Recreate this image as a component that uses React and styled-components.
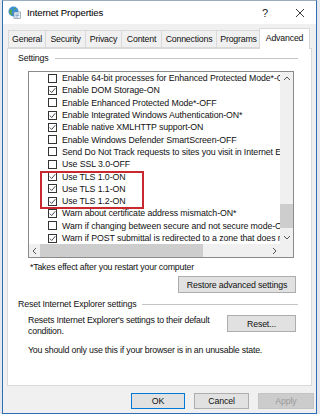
import React from 'react'
import styled, { createGlobalStyle } from 'styled-components'

const GlobalStyle = createGlobalStyle`
    html, body {
        margin: 0;
        padding: 0;
        background: #e4e8ec;
    }
    body {
        font-family: 'Liberation Sans', Arial, sans-serif;
        font-size: 9px;
        color: #111;
    }
`

const Window = styled.div`
    width: 313px;
    height: 412px;
    margin-left: 2px;
    border: 1px solid #2c6db5;
    border-top-color: #9ab;
    background: #f0f0f0;
    display: flex;
    flex-direction: column;
    overflow: hidden;
`

const TitleBar = styled.div`
    height: 23px;
    background: #fff;
    display: flex;
    align-items: center;
    padding-left: 5px;
    flex-shrink: 0;
`

const Title = styled.span`
    margin-left: 6px;
    font-size: 9.6px;
    letter-spacing: -0.15px;
    color: #000;
    flex: 1;
`

const TitleButton = styled.span`
    width: ${p => p.w}px;
    display: flex;
    justify-content: center;
    align-items: center;
    color: #222;
    font-size: 11px;
`

const Body = styled.div`
    flex: 1;
    display: flex;
    flex-direction: column;
    padding: 4px 4px 0 4px;
`

const TabStrip = styled.div`
    display: flex;
    align-items: flex-end;
    height: 20px;
    padding-left: 1px;
    position: relative;
    z-index: 1;
`

const Tab = styled.div`
    width: ${p => p.w}px;
    height: ${p => (p.active ? 21 : 18)}px;
    margin: ${p => (p.active ? '0 -1px -1px -1px' : '0')};
    box-sizing: border-box;
    border: 1px solid #d9d9d9;
    border-right: ${p => (p.active ? '1px solid #d9d9d9' : 'none')};
    border-bottom: ${p => (p.active ? 'none' : '1px solid #d9d9d9')};
    background: ${p => (p.active ? '#fff' : '#f0f0f0')};
    display: flex;
    align-items: ${p => (p.active ? 'flex-start' : 'center')};
    padding-top: ${p => (p.active ? '4px' : '0')};
    justify-content: center;
    font-size: 8.8px;
    letter-spacing: -0.2px;
    color: #111;
    &:last-child { border-right: 1px solid #d9d9d9; }
`

const Panel = styled.div`
    width: 305px;
    height: 338px;
    box-sizing: border-box;
    border: 1px solid #d9d9d9;
    background: #fff;
    display: flex;
    flex-direction: column;
    flex-shrink: 0;
`

const GroupHeader = styled.div`
    display: flex;
    align-items: center;
    height: 10px;
    padding: 0 13px 0 10px;
    margin-top: ${p => p.top}px;
    font-size: 8.8px;
    letter-spacing: -0.15px;
    gap: 6px;
    &::after {
        content: '';
        flex: 1;
        height: 1px;
        background: #c4c4c4;
    }
`

const ListBox = styled.div`
    width: 266px;
    height: 187px;
    box-sizing: border-box;
    margin: 8px 0 0 20px;
    border: 1px solid #8a8a8a;
    display: grid;
    grid-template-columns: 1fr 13px;
    grid-template-rows: 1fr 13px;
`

const ListContent = styled.div`
    position: relative;
    overflow: hidden;
`

const Row = styled.div`
    height: 12.3px;
    display: flex;
    align-items: center;
    padding-left: 19px;
    white-space: nowrap;
    font-size: 8.8px;
    letter-spacing: -0.1px;
    color: #111;
`

const Box = styled.span`
    width: 9px;
    height: 9px;
    box-sizing: border-box;
    border: 1px solid #333;
    background: #fff;
    margin-right: 5px;
    flex-shrink: 0;
    display: flex;
    align-items: center;
    justify-content: center;
`

const Highlight = styled.div`
    position: absolute;
    left: 11px;
    top: 99px;
    width: 104px;
    height: 38px;
    box-sizing: border-box;
    border: 2px solid #c8282e;
`

const ScrollTrack = styled.div`
    background: #f0f0f0;
    position: relative;
    display: flex;
    flex-direction: ${p => (p.horizontal ? 'row' : 'column')};
    justify-content: space-between;
    align-items: center;
`

const Thumb = styled.div`
    position: absolute;
    background: #cdcdcd;
`

const Arrow = styled.span`
    width: ${p => (p.horizontal ? 11 : 13)}px;
    height: 13px;
    display: flex;
    align-items: center;
    justify-content: center;
`

const Corner = styled.div`
    background: #f0f0f0;
`

const Note = styled.div`
    margin: 4px 0 0 22px;
    height: 10px;
    line-height: 10px;
    font-size: 8.8px;
    letter-spacing: -0.2px;
`

const ButtonRow = styled.div`
    display: flex;
    justify-content: flex-end;
    padding-right: 15px;
    margin-top: ${p => p.top}px;
`

const Button = styled.div`
    width: ${p => p.w}px;
    height: ${p => p.h || 17}px;
    box-sizing: border-box;
    border: 1px solid ${p => (p.focus ? '#0078d7' : p.disabled ? '#c4c4c4' : '#adadad')};
    background: ${p => (p.disabled ? '#cccccc' : '#e1e1e1')};
    color: ${p => (p.disabled ? '#9a9a9a' : '#111')};
    display: flex;
    align-items: center;
    justify-content: center;
    font-size: 8.8px;
    letter-spacing: -0.15px;
`

const ResetRow = styled.div`
    display: flex;
    justify-content: space-between;
    align-items: flex-start;
    padding: 0 15px 0 20px;
    margin-top: 6px;
`

const ResetText = styled.div`
    font-size: 8.8px;
    letter-spacing: -0.2px;
    line-height: 11px;
    width: 190px;
`

const Para = styled.div`
    margin: 8px 0 0 20px;
    font-size: 8.8px;
    letter-spacing: -0.2px;
`

const Footer = styled.div`
    display: flex;
    justify-content: flex-end;
    gap: 9px;
    padding: 7px 0 0 0;
    margin-right: -2px;
`

const Check = () =>
    <svg width="7" height="7" viewBox="0 0 7 7">
        <polyline points="0.8,3.6 2.7,5.5 6.3,1.2" fill="none" stroke="#3a3a3a" strokeWidth="0.9" />
    </svg>

const Chevron = ({ dir }) => {
    const pts = {
        up: '1,5 4,2 7,5',
        down: '1,2 4,5 7,2',
        left: '5,1 2,4 5,7',
        right: '2,1 5,4 2,7'
    }[dir]
    return (
        <svg width="8" height="8" viewBox="0 0 8 8">
            <polyline points={pts} fill="none" stroke="#555" strokeWidth="1" />
        </svg>
    )
}

const AppIcon = () =>
    <svg width="13" height="13" viewBox="0 0 13 13">
        <circle cx="5.5" cy="5.5" r="5" fill="#3c8fd6" />
        <path d="M2 3.5 C3.5 2.5 4.5 4 3.8 5.5 C3 7 4.5 8 5 9.5 L2.5 8.5 C1 7 1 5 2 3.5Z" fill="#5aa84a" />
        <path d="M6 1.5 C7.5 2 8.5 3 8 4 L6.5 3.5Z" fill="#5aa84a" />
        <rect x="6" y="6" width="6.5" height="6.5" fill="#f4f7fb" stroke="#6a7f95" strokeWidth="0.6" />
        <line x1="7.3" y1="8" x2="11.2" y2="8" stroke="#4a7ab0" strokeWidth="0.6" />
        <line x1="7.3" y1="9.5" x2="11.2" y2="9.5" stroke="#4a7ab0" strokeWidth="0.6" />
        <line x1="7.3" y1="11" x2="10.2" y2="11" stroke="#4a7ab0" strokeWidth="0.6" />
    </svg>

const CloseIcon = () =>
    <svg width="10" height="10" viewBox="0 0 10 10">
        <path d="M1 1 L9 9 M9 1 L1 9" stroke="#222" strokeWidth="0.9" />
    </svg>

const tabs = [
    ['General', 37],
    ['Security', 40],
    ['Privacy', 36],
    ['Content', 40],
    ['Connections', 55],
    ['Programs', 44],
    ['Advanced', 51]
]

const settings = [
    ['Enable 64-bit processes for Enhanced Protected Mode*-ON', false],
    ['Enable DOM Storage-ON', true],
    ['Enable Enhanced Protected Mode*-OFF', false],
    ['Enable Integrated Windows Authentication-ON*', true],
    ['Enable native XMLHTTP support-ON', true],
    ['Enable Windows Defender SmartScreen-OFF', false],
    ['Send Do Not Track requests to sites you visit in Internet Explorer-OFF', false],
    ['Use SSL 3.0-OFF', false],
    ['Use TLS 1.0-ON', true],
    ['Use TLS 1.1-ON', true],
    ['Use TLS 1.2-ON', true],
    ['Warn about certificate address mismatch-ON*', true],
    ['Warn if changing between secure and not secure mode-ON', false],
    ['Warn if POST submittal is redirected to a zone that does not permit posts-ON', true]
]

const App = () =>
    <>
        <GlobalStyle />
        <Window>
            <TitleBar>
                <AppIcon />
                <Title>Internet Properties</Title>
                <TitleButton w={38}>?</TitleButton>
                <TitleButton w={32}><CloseIcon /></TitleButton>
            </TitleBar>
            <Body>
                <TabStrip>
                    {tabs.map(([name, w]) =>
                        <Tab key={name} w={w} active={name === 'Advanced'}>{name}</Tab>
                    )}
                </TabStrip>
                <Panel>
                    <GroupHeader top={4}>Settings</GroupHeader>
                    <ListBox>
                        <ListContent>
                            {settings.map(([label, on]) =>
                                <Row key={label}>
                                    <Box>{on && <Check />}</Box>
                                    {label}
                                </Row>
                            )}
                            <Highlight />
                        </ListContent>
                        <ScrollTrack>
                            <Arrow><Chevron dir="up" /></Arrow>
                            <Thumb style={{ top: 132, left: 0, width: 13, height: 24 }} />
                            <Arrow><Chevron dir="down" /></Arrow>
                        </ScrollTrack>
                        <ScrollTrack horizontal>
                            <Arrow horizontal><Chevron dir="left" /></Arrow>
                            <Thumb style={{ left: 11, top: 0, width: 163, height: 13 }} />
                            <Arrow horizontal><Chevron dir="right" /></Arrow>
                        </ScrollTrack>
                        <Corner />
                    </ListBox>
                    <Note>*Takes effect after you restart your computer</Note>
                    <ButtonRow top={4}>
                        <Button w={118}>Restore advanced settings</Button>
                    </ButtonRow>
                    <GroupHeader top={6}>Reset Internet Explorer settings</GroupHeader>
                    <ResetRow>
                        <ResetText>
                            Resets Internet Explorer's settings to their default
                            <br />
                            condition.
                        </ResetText>
                        <Button w={69}>Reset...</Button>
                    </ResetRow>
                    <Para>You should only use this if your browser is in an unusable state.</Para>
                </Panel>
                <Footer>
                    <Button w={54} h={16} focus>OK</Button>
                    <Button w={55} h={16}>Cancel</Button>
                    <Button w={56} h={16} disabled>Apply</Button>
                </Footer>
            </Body>
        </Window>
    </>

export default App
